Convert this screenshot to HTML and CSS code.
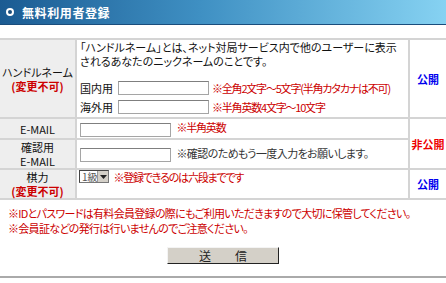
FILE: index.html
```html
<!DOCTYPE html>
<html lang="ja">
<head>
    <meta charset="UTF-8">
    <title>無料利用者登録</title>
    <link rel="stylesheet" href="styles.css">
</head>
<body>
    <div class="title-bar">
        <span class="title-mark"></span>
        <h1>無料利用者登録</h1>
    </div>

    <table class="reg-table">
        <tr class="row-handle">
            <th>ハンドルネーム<br><span class="fixed">(変更不可)</span></th>
            <td class="handle-cell">
                <p class="desc">「ハンドルネーム」とは、ネット対局サービス内で他のユーザーに表示されるあなたのニックネームのことです。</p>
                <div class="field-line">
                    <span class="field-name">国内用</span>
                    <input type="text" class="txt">
                    <span class="warn">※全角2文字～5文字(半角カタカナは不可)</span>
                </div>
                <div class="field-line second">
                    <span class="field-name">海外用</span>
                    <input type="text" class="txt">
                    <span class="warn">※半角英数4文字～10文字</span>
                </div>
            </td>
            <td class="scope public">公開</td>
        </tr>
        <tr class="row-mail">
            <th>E-MAIL</th>
            <td>
                <input type="text" class="txt">
                <span class="warn">※半角英数</span>
            </td>
            <td class="scope private" rowspan="2">非公開</td>
        </tr>
        <tr class="row-confirm">
            <th>確認用<br>E-MAIL</th>
            <td>
                <input type="text" class="txt">
                <span class="note">※確認のためもう一度入力をお願いします。</span>
            </td>
        </tr>
        <tr class="row-rank">
            <th>棋力<br><span class="fixed">(変更不可)</span></th>
            <td class="rank-cell">
                <span class="rank-box">
                    <select class="rank">
                        <option>1級</option>
                    </select>
                    <span class="rank-arrow">
                        <svg width="7" height="4" viewBox="0 0 7 4"><path d="M0 0h7L3.5 4z" fill="#222"/></svg>
                    </span>
                </span>
                <span class="warn">※登録できるのは六段までです</span>
            </td>
            <td class="scope public">公開</td>
        </tr>
    </table>

    <div class="notes">
        <p>※IDとパスワードは有料会員登録の際にもご利用いただきますので大切に保管してください。</p>
        <p>※会員証などの発行は行いませんのでご注意ください。</p>
    </div>

    <div class="submit-area">
        <button type="submit">送　　信</button>
    </div>

    <div class="bottom-line"></div>
</body>
</html>
```

FILE: styles.css
```css
/* General */
body {
    margin: 0;
    width: 446px;
    font-family: "Noto Sans CJK JP", sans-serif;
    font-size: 11px;
    font-feature-settings: "palt";
    color: #111;
    background: #fff;
}

/* Title bar */
.title-bar {
    height: 24px;
    border-bottom: 1px solid #1a4d7c;
    background: linear-gradient(to right, #1b5b92, #3f90c3 45%, #86d2f2);
    display: flex;
    align-items: center;
    padding-left: 5px;
    margin-bottom: 13px;
}

.title-mark {
    width: 4px;
    height: 4px;
    border-radius: 50%;
    background: #1a4d7c;
    border: 2px solid #fff;
    margin: 0 8px 0 1px;
}

.title-bar h1 {
    margin: 0;
    color: #fff;
    font-size: 12px;
    font-weight: bold;
    letter-spacing: 0.6px;
}

/* Table */
.reg-table {
    width: 446px;
    border-collapse: collapse;
    border-top: 2px solid #c8c8c8;
    line-height: 14px;
}

.reg-table th,
.reg-table td {
    border: 2px solid #d4d4d4;
    padding: 0 3px;
}

.reg-table tr > :first-child {
    border-left: none;
}

.reg-table tr > :last-child {
    border-right: none;
}

.reg-table th {
    width: 75px;
    padding: 0;
    background: #eeeeee;
    font-weight: normal;
    text-align: center;
    line-height: 14px;
}

.fixed {
    color: #cc0000;
    font-weight: bold;
}

.reg-table .scope {
    width: 36px;
    padding: 0;
    text-align: center;
    font-weight: bold;
    white-space: nowrap;
}

.public {
    color: #0000ee;
}

.private {
    color: #ee0000;
}

/* Handle name row */
.handle-cell {
    vertical-align: top;
    padding-top: 1px;
}

.desc {
    margin: 0 0 13px;
}

.field-line {
    display: flex;
    align-items: center;
    white-space: nowrap;
}

.field-line.second {
    margin-top: 5px;
}

.field-name {
    flex: none;
    width: 38px;
}

.txt {
    flex: none;
    width: 89px;
    height: 12px;
    padding: 0;
    margin: 0 3px 0 0;
    border: 1px solid #a5a5a5;
    border-top-color: #7f7f7f;
    vertical-align: middle;
}

.warn {
    color: #cc0000;
    letter-spacing: -1.2px;
    white-space: nowrap;
}

.note {
    color: #333;
    letter-spacing: -0.6px;
}

.row-handle {
    height: 79px;
}

.row-mail {
    height: 21px;
}

.row-confirm {
    height: 29px;
}

.row-rank {
    height: 29px;
}

/* Rank select */
.rank-cell {
    vertical-align: top;
    padding-top: 2px;
}

.rank-box {
    position: relative;
    display: inline-block;
    vertical-align: top;
    margin-left: -1px;
    margin-right: 2px;
}

.rank {
    appearance: none;
    display: block;
    width: 30px;
    height: 13px;
    font-family: inherit;
    font-size: 10px;
    line-height: 11px;
    padding: 0 0 0 2px;
    border: 1px solid #777;
    border-top-color: #444;
    border-left-color: #444;
    background: #fff;
    color: #555;
}

.rank-arrow {
    position: absolute;
    right: 1px;
    top: 1px;
    width: 10px;
    height: 11px;
    background: #d4d0c8;
    border-left: 1px solid #999;
    display: flex;
    align-items: center;
    justify-content: center;
}

/* Notes */
.notes {
    padding: 6px 8px 0;
    color: #cc0000;
    letter-spacing: -0.7px;
}

.notes p {
    margin: 0;
    line-height: 15px;
    white-space: nowrap;
}

.submit-area {
    display: flex;
    justify-content: center;
    padding: 11px 0 12px;
}

.submit-area button {
    width: 112px;
    height: 17px;
    padding: 0;
    font-family: inherit;
    font-size: 12px;
    line-height: 14px;
    color: #222;
    background: #d4d0c8;
    border: 1px solid;
    border-color: #f4f4f4 #222 #222 #f4f4f4;
}

.bottom-line {
    height: 2px;
    background: #aaaaaa;
}
```
